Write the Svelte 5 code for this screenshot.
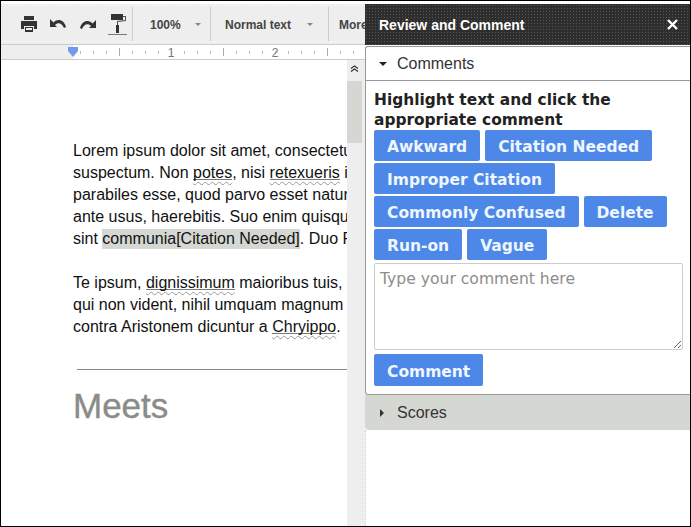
<script lang="ts">
	// ruler ticks every eighth of an inch (104px per inch, 118 = 1in mark)
	const rulerTicks = Array.from({ length: 28 }, (_, i) => 79 + i * 13);
	const inchMarks = [118, 222, 326];

	const buttonRows = [
		['Awkward', 'Citation Needed'],
		['Improper Citation'],
		['Commonly Confused', 'Delete'],
		['Run-on', 'Vague']
	];
</script>

<div class="window">
	<div class="editor">
		<div class="toolbar">
			<div class="tool-group icons">
				<svg class="icon" width="18" height="16" viewBox="0 0 18 16">
					<path d="M4 0h10v4H4z" fill="#333" />
					<path d="M1 5h16v8h-3v-3H4v3H1z" fill="#333" />
					<path d="M5 11h8v5H5z" fill="#333" />
					<path d="M6 12h6v2H6z" fill="#eee" />
				</svg>
				<svg class="icon" width="17" height="10" viewBox="0 0 17 10">
					<path d="M0 0v8h7L5 6c3-3 7-2 9 3l2-1C14 1 8-1 3.500 3.500z" fill="#333" />
				</svg>
				<svg class="icon" width="17" height="10" viewBox="0 0 17 10">
					<path d="M17 1v8h-7l2-2c-3-3-7-2-9 3L1 9c2-7 8-9 12.500-4.500z" fill="#333" />
				</svg>
				<svg class="icon" width="20" height="22" viewBox="0 0 20 22">
					<path d="M3 1h12v6H3z" fill="#333" />
					<path d="M15 3h3v5l-8 1v3H9V8l8-1V4h-2z" fill="#555" />
					<path d="M8 12h3v8H8z" fill="#333" />
					<path d="M0 21h19v1H0z" fill="#777" />
				</svg>
			</div>
			<div class="tool-group zoom-group">
				<span class="tool-label">100%</span>
				<span class="caret"></span>
			</div>
			<div class="tool-group style-group">
				<span class="tool-label">Normal text</span>
				<span class="caret"></span>
			</div>
			<div class="tool-group more-group">
				<span class="tool-label">More</span>
			</div>
		</div>

		<div class="ruler">
			<svg width="364" height="14" viewBox="0 0 364 14">
				<rect x="0" y="0" width="72" height="14" fill="#eee" />
				<rect x="72" y="0" width="292" height="14" fill="#fff" />
				{#each rulerTicks as x}
					<rect x={x} y="6" width="1" height="3" fill="#bbb" />
				{/each}
				{#each inchMarks as x}
					<rect x={x} y="3" width="1" height="8" fill="#aaa" />
				{/each}
				<path d="M67 2h10v4l-5 6-5-6z" fill="#6f9be8" />
				<text x="170" y="12" class="ruler-num" text-anchor="middle">1</text>
				<text x="274" y="12" class="ruler-num" text-anchor="middle">2</text>
			</svg>
		</div>

		<div class="doc-area">
			<div class="page">
				<p>Lorem ipsum dolor sit amet, consectetur adipiscing elit<br />
					suspectum. Non <u>potes</u>, nisi <u>retexueris</u> istam rationem<br />
					parabiles esse, quod parvo esset natura contenta<br />
					ante usus, haerebitis. Suo enim quisque studio maxime<br />
					sint <mark>communia[Citation Needed]</mark>. Duo Reges constructio</p>
				<p>Te ipsum, <u>dignissimum</u> maioribus tuis, voluptas<br />
					qui non vident, nihil umquam magnum ac cognitione<br />
					contra Aristonem dicuntur a <u>Chryippo</u>.</p>
				<hr />
				<h2>Meets</h2>
			</div>
			<div class="scrollbar">
				<svg class="scroll-up" width="9" height="7" viewBox="0 0 9 7">
					<path d="M1 3.500L4.500 1 8 3.500M1 6.500L4.500 4 8 6.500" fill="none" stroke="#333" stroke-width="1.200" />
				</svg>
				<div class="thumb"></div>
			</div>
		</div>
	</div>

	<aside class="panel">
		<header class="panel-header">
			<span>Review and Comment</span>
			<svg width="11" height="11" viewBox="0 0 11 11">
				<path d="M1 1l9 9M10 1l-9 9" stroke="#fff" stroke-width="2.400" />
			</svg>
		</header>

		<section class="comments">
			<div class="section-head">
				<span class="arrow-down"></span>
				<span>Comments</span>
			</div>
			<div class="section-body">
				<div class="prompt">Highlight text and click the appropriate comment</div>
				{#each buttonRows as row}
					<div class="button-row">
						{#each row as label}
							<button>{label}</button>
						{/each}
					</div>
				{/each}
				<textarea placeholder="Type your comment here"></textarea>
				<button class="submit">Comment</button>
			</div>
		</section>

		<div class="scores">
			<span class="arrow-right"></span>
			<span>Scores</span>
		</div>
		<div class="panel-rest"></div>
	</aside>
</div>

<style>
	:global(body) {
		margin: 0;
		background: #fff;
	}

	.window {
		box-sizing: border-box;
		width: 691px;
		height: 527px;
		display: flex;
		border: 1px solid #000;
		padding-top: 3px;
		overflow: hidden;
		font-family: 'Liberation Sans', Arial, sans-serif;
	}

	.editor {
		width: 364px;
		flex: none;
		display: flex;
		flex-direction: column;
	}

	.toolbar {
		height: 41px;
		flex: none;
		box-sizing: border-box;
		display: flex;
		background-color: #eee;
		background-image: radial-gradient(circle, #fff 0.5px, transparent 0.6px);
		background-size: 3px 3px;
		border-bottom: 1px solid #ccc;
	}

	.tool-group {
		display: flex;
		align-items: center;
		box-sizing: border-box;
		border-right: 1px solid #ccc;
		background: #eee;
		margin: 3px 0;
	}

	.icons {
		width: 132px;
		padding-left: 19px;
		gap: 12px;
	}

	.zoom-group {
		width: 78px;
		padding-left: 17px;
	}

	.style-group {
		width: 118px;
		padding-left: 14px;
	}

	.more-group {
		flex: 1;
		border-right: none;
		padding-left: 10px;
		overflow: hidden;
	}

	.tool-label {
		font-size: 12px;
		font-weight: bold;
		color: #444;
		white-space: nowrap;
		padding-top: 2px;
	}

	.caret {
		margin-left: 14px;
		width: 0;
		height: 0;
		border-left: 3px solid transparent;
		border-right: 3px solid transparent;
		border-top: 3px solid #888;
	}

	.style-group .caret {
		margin-left: 16px;
	}

	.ruler {
		height: 15px;
		flex: none;
		border-bottom: 1px solid #ccc;
		box-sizing: border-box;
	}

	.ruler svg {
		display: block;
	}

	.ruler-num {
		font-size: 12px;
		fill: #777;
		font-family: 'Liberation Sans', Arial, sans-serif;
	}

	.doc-area {
		flex: 1;
		display: flex;
		min-height: 0;
	}

	.page {
		width: 346px;
		flex: none;
		box-sizing: border-box;
		padding: 80px 0 0 72px;
		overflow: hidden;
		white-space: nowrap;
	}

	.page p {
		margin: 0 0 22px;
		font-size: 16px;
		line-height: 22px;
		color: #111;
	}

	u {
		text-decoration: underline wavy #999 1px;
		text-underline-offset: 3px;
		background: linear-gradient(#777, #777) 0 15px / 100% 1px no-repeat;
	}

	mark {
		background: #d5d7d3;
		color: #111;
		padding: 1px 0 2px;
	}

	hr {
		margin: 31px 0 0 4px;
		border: none;
		border-top: 1px solid #888;
	}

	h2 {
		margin: 15px 0 0;
		font-size: 35px;
		font-weight: normal;
		line-height: 42px;
		color: #8a8c88;
		-webkit-text-stroke: 0.4px #8a8c88;
	}

	.scrollbar {
		flex: 1;
		background: #eee;
		position: relative;
		padding-top: 21px;
	}

	.scroll-up {
		position: absolute;
		top: 5px;
		left: 3px;
	}

	.thumb {
		width: 15px;
		height: 62px;
		background: #d5d7d3;
	}

	.panel {
		flex: 1;
		display: flex;
		flex-direction: column;
		min-width: 0;
	}

	.panel-header {
		height: 41px;
		flex: none;
		box-sizing: border-box;
		display: flex;
		align-items: center;
		justify-content: space-between;
		padding: 0 12px 0 14px;
		background-color: #2e2e2e;
		background-image: radial-gradient(circle, #555 0.5px, transparent 0.6px);
		background-size: 3px 3px;
		color: #fff;
		font-size: 14px;
		font-weight: bold;
	}

	.comments {
		margin-top: 1px;
		border-left: 1px solid #999;
		border-top: 1px solid #999;
		border-bottom: 1px solid #999;
		border-radius: 3px 0 0 3px;
	}

	.section-head {
		height: 33px;
		display: flex;
		align-items: center;
		padding-left: 13px;
		gap: 10px;
		font-size: 16px;
		color: #333;
		border-bottom: 1px solid #999;
	}

	.arrow-down {
		width: 0;
		height: 0;
		border-left: 4px solid transparent;
		border-right: 4px solid transparent;
		border-top: 4px solid #222;
	}

	.arrow-right {
		width: 0;
		height: 0;
		border-top: 4px solid transparent;
		border-bottom: 4px solid transparent;
		border-left: 4px solid #333;
	}

	.section-body {
		padding: 9px 8px 8px;
		display: flex;
		flex-direction: column;
		align-items: flex-start;
	}

	.prompt {
		font-family: 'DejaVu Sans', Verdana, sans-serif;
		font-weight: bold;
		font-size: 15.4px;
		line-height: 20px;
		color: #222;
		width: 290px;
	}

	.button-row {
		display: flex;
		gap: 5px;
		margin-bottom: 2px;
	}

	button {
		height: 31px;
		padding: 2px 13px 0;
		border: none;
		border-radius: 2px;
		background: #4d88e8;
		color: #eef6ff;
		font-family: 'DejaVu Sans', Verdana, sans-serif;
		font-weight: bold;
		font-size: 15.5px;
	}

	textarea {
		box-sizing: border-box;
		width: 309px;
		height: 87px;
		margin: 1px 0 4px;
		padding: 6px 5px 4px;
		border: 1px solid #ccc;
		border-radius: 2px;
		font-family: 'DejaVu Sans', Verdana, sans-serif;
		font-size: 15.6px;
	}

	textarea::placeholder {
		color: #8c8e8a;
		opacity: 1;
	}

	.submit {
		height: 32px;
		padding-top: 3px;
	}

	.scores {
		height: 35px;
		flex: none;
		box-sizing: border-box;
		display: flex;
		align-items: center;
		gap: 13px;
		padding: 1px 0 0 15px;
		font-size: 16px;
		color: #333;
		background-color: #d5d7d3;
		background-image: radial-gradient(circle, #eee 0.5px, transparent 0.7px);
		background-size: 2px 2px;
		border-radius: 0 0 0 4px;
	}

	.panel-rest {
		flex: 1;
		border-left: 1px dotted #ccc;
	}
</style>
